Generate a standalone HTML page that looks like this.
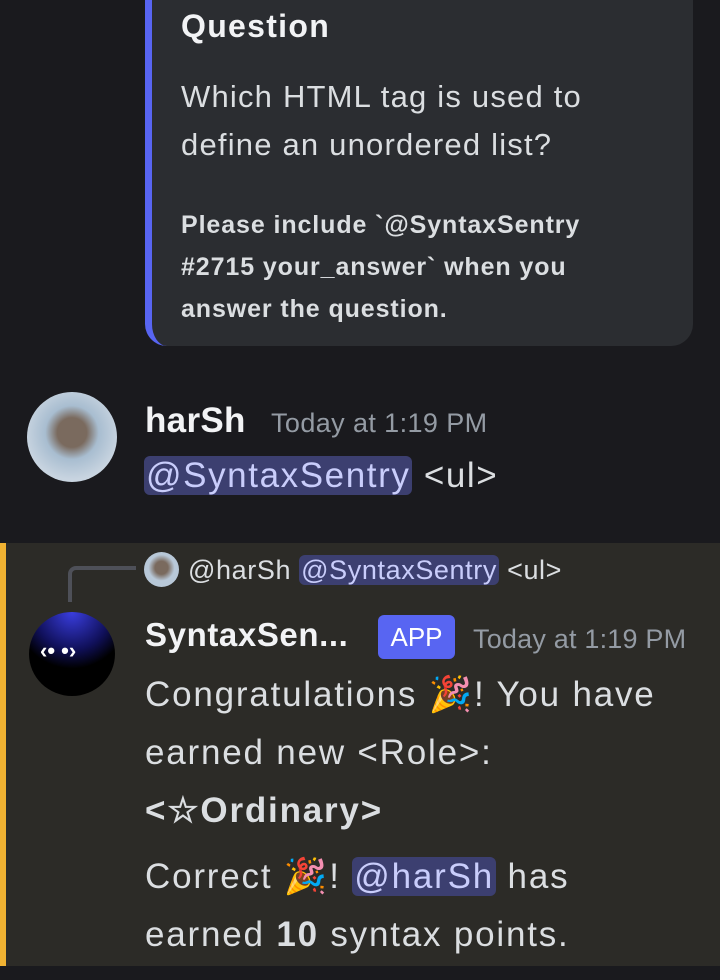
<!DOCTYPE html>
<html><head><style>
*{margin:0;padding:0;box-sizing:border-box}
body{width:720px;height:980px;background:#1a1a1e;font-family:"Liberation Sans",sans-serif;color:#dbdee1;position:relative;overflow:hidden}
.abs{position:absolute;white-space:nowrap}
.embed{position:absolute;left:145px;top:-20px;width:548px;height:366px;background:#2b2d31;border-radius:0 0 22px 22px;border-left:7px solid #5865f2}
.hl{position:absolute;left:0;top:543px;width:720px;height:423px;background:#2c2b27;border-left:6px solid #f0b232}
.m{background:#3c3f70;color:#c9cdfb;border-radius:6px;padding:0 2px}
</style></head><body>
<div class="embed"></div>
<div class="abs" style="left:181px;top:8px;font-size:32px;font-weight:bold;color:#f2f3f5;letter-spacing:1.3px">Question</div>
<div class="abs" style="left:181px;top:73px;font-size:31px;color:#dbdee1;line-height:48px;letter-spacing:1.2px">Which HTML tag is used to<br>define an unordered list?</div>
<div class="abs" style="left:181px;top:204px;font-size:25px;font-weight:bold;color:#dbdee1;line-height:42px;letter-spacing:0.9px">Please include `@SyntaxSentry<br>#2715 your_answer` when you<br>answer the question.</div>

<div class="abs" style="left:27px;top:392px;width:90px;height:90px;border-radius:50%;background:radial-gradient(circle at 50% 45%,#7a6a5e 0 22%,#a8bdd0 40%,#c8d4e0 70%)"></div>
<div class="abs" style="left:145px;top:401px;font-size:35px;font-weight:bold;color:#f2f3f5;letter-spacing:0.3px">harSh</div>
<div class="abs" style="left:271px;top:408px;font-size:27px;color:#949ba4;letter-spacing:0.4px">Today at 1:19 PM</div>
<div class="abs" style="left:144px;top:450px;font-size:35px;line-height:52px;letter-spacing:1.6px"><span class="m">@SyntaxSentry</span> <span style="color:#dbdee1">&lt;ul&gt;</span></div>

<div class="hl"></div>
<div class="abs" style="left:68px;top:566px;width:68px;height:36px;border-left:4px solid #4e5058;border-top:4px solid #4e5058;border-top-left-radius:8px"></div>
<div class="abs" style="left:144px;top:552px;width:35px;height:35px;border-radius:50%;background:radial-gradient(circle at 50% 45%,#7a6a5e 0 25%,#b8c8d8 50%)"></div>
<div class="abs" style="left:188px;top:553px;font-size:27px;line-height:34px;color:#dbdee1;letter-spacing:0.6px"><span>@harSh</span> <span class="m">@SyntaxSentry</span> &lt;ul&gt;</div>

<div class="abs" style="left:29px;top:612px;width:86px;height:84px;border-radius:50%;background:radial-gradient(circle at 50% 0%,#3a3ee0 0,#10105a 40%,#000 60%)"></div>
<div class="abs" style="left:40px;top:638px;font-size:22px;font-weight:bold;color:#fff">‹• •›</div>
<div class="abs" style="left:145px;top:616px;font-size:33px;font-weight:bold;color:#f2f3f5;letter-spacing:0.6px">SyntaxSen...</div>
<div class="abs" style="left:378px;top:615px;width:77px;height:44px;background:#5865f2;border-radius:6px;color:#fff;font-size:26px;text-align:center;line-height:44px">APP</div>
<div class="abs" style="left:473px;top:624px;font-size:27px;color:#949ba4;letter-spacing:0.2px">Today at 1:19 PM</div>
<div class="abs" style="left:145px;top:666px;font-size:35px;line-height:58px;color:#dbdee1;letter-spacing:1.8px">Congratulations 🎉! You have<br>earned new &lt;Role&gt;:<br><b>&lt;☆Ordinary&gt;</b></div>
<div class="abs" style="left:145px;top:848px;font-size:35px;line-height:58px;color:#dbdee1;letter-spacing:1.8px">Correct 🎉! <span class="m">@harSh</span> has<br>earned <b>10</b> syntax points.</div>
</body></html>
